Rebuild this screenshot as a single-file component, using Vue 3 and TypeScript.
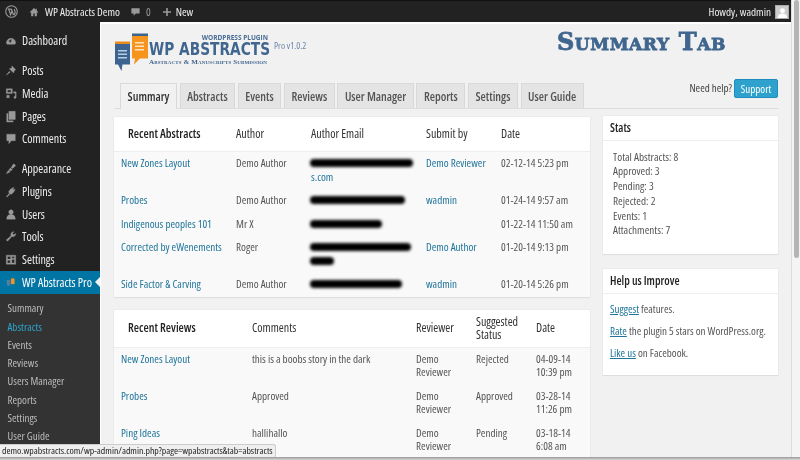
<script setup lang="ts">
type MenuItem = { label: string; icon: string; gap?: boolean }
const menu: MenuItem[] = [
  { label: 'Dashboard', icon: 'M1.500 10a5.500 5.500 0 1 1 11 0l-1 1.500h-9zM4 7.500l3 2.500 .8-5z' },
  { label: 'Posts', icon: 'M8 1.500l4.500 4.500-1.500 1-1 3-5-5 3-1zM5 8l-3.500 4.500L6 9z', gap: true },
  { label: 'Media', icon: 'M1.500 1.500h7v5.500h-7zM3 3v2.500h4V3zM10 5h3v6.500a1.300 1.300 0 1 1-1-1.300V6.500h-2zM2 9h3v3H2z' },
  { label: 'Pages', icon: 'M4.500 1h7.500v9.500H4.500zM2 3.500h1.500v8.500h6v1.500H2z' },
  { label: 'Comments', icon: 'M2 2h10v7.500H7.500L4.500 13V9.500H2z' },
  { label: 'Appearance', icon: 'M7 6l3-4.500 2.500 2L9 7zM6.500 6.500l2 2-2 1.500-2-1.500zM4 9l2 2-4.500 2z', gap: true },
  { label: 'Plugins', icon: 'M6.500 4l4-2-1.500 3 3-.5-2 3.500-3 2.500-3-3zM5 9l-3.500 4 1 .5 3.500-3.500z' },
  { label: 'Users', icon: 'M7 1.500a2.700 2.700 0 1 1-.01 0zM2 12.500c0-4 2-5.500 5-5.500s5 1.500 5 5.500z' },
  { label: 'Tools', icon: 'M12.500 3.500a3.300 3.300 0 0 1-4.500 3.500l-5 5.500-1.500-1.500 5.500-5a3.300 3.300 0 0 1 3.500-4.500L8.500 3.500l1.500 1.500z' },
  { label: 'Settings', icon: 'M1.500 2h11v10.500h-11zM3 3.500v3h3.500v-3zM8 3.500v2h3v-2zM3 8v3h3V8zM8 7v4h3V7z' },
]
const submenu = ['Summary', 'Abstracts', 'Events', 'Reviews', 'Users Manager', 'Reports', 'Settings', 'User Guide']
const tabs = ['Summary', 'Abstracts', 'Events', 'Reviews', 'User Manager', 'Reports', 'Settings', 'User Guide']

const abstracts = [
  { title: 'New Zones Layout', author: 'Demo Author', masks: [103], tail: 's.com', by: 'Demo Reviewer', date: '02-12-14 5:23 pm' },
  { title: 'Probes', author: 'Demo Author', masks: [95], tail: '', by: 'wadmin', date: '01-24-14 9:57 am' },
  { title: 'Indigenous peoples 101', author: 'Mr X', masks: [72], tail: '', by: '', date: '01-22-14 11:50 am' },
  { title: 'Corrected by eWenements', author: 'Roger', masks: [101, 24], tail: '', by: 'Demo Author', date: '01-20-14 9:13 pm' },
  { title: 'Side Factor & Carving', author: 'Demo Author', masks: [92], tail: '', by: 'wadmin', date: '01-20-14 5:26 pm' },
]
const reviews = [
  { title: 'New Zones Layout', comment: 'this is a boobs story in the dark', status: 'Rejected', d1: '04-09-14', d2: '10:39 pm' },
  { title: 'Probes', comment: 'Approved', status: 'Approved', d1: '03-28-14', d2: '11:26 pm' },
  { title: 'Ping Ideas', comment: 'hallihallo', status: 'Pending', d1: '03-18-14', d2: '6:08 am' },
]
const stats = ['Total Abstracts: 8', 'Approved: 3', 'Pending: 3', 'Rejected: 2', 'Events: 1', 'Attachments: 7']
</script>

<template>
  <div class="root">
    <div class="page">
      <header class="topbar">
        <svg class="wp" viewBox="0 0 14 14" width="13" height="13"><circle cx="7" cy="7" r="6.200" fill="none" stroke="#999" stroke-width="1.200"/><path d="M3 4.500h4M7 4.500L9 10.500M4 4.500l2 6 1.500-4M10 4.500l1 3.500-1.500 3" fill="none" stroke="#999" stroke-width="1.300"/></svg>
        <svg class="home" viewBox="0 0 14 14" width="10" height="10"><path d="M7 1.500L1 7.200l1 1L3 7.400V13h3V9h2v4h3V7.400l1 .800 1-1L11 5.300V2.500H9.500v1.400z" fill="#999"/></svg>
        <span class="site">WP Abstracts Demo</span>
        <svg class="bub" viewBox="0 0 12 12" width="9" height="10"><path d="M.5 1h11v7H6.500L3.500 11V8h-3z" fill="#999"/></svg>
        <span class="count">0</span>
        <svg class="plus" viewBox="0 0 10 10" width="8" height="8"><path d="M4 0h2v4h4v2H6v4H4V6H0V4h4z" fill="#999"/></svg>
        <span class="new">New</span>
        <span class="howdy">Howdy, wadmin</span>
        <span class="avatar"><svg viewBox="0 0 12 12" width="11" height="11"><circle cx="6" cy="4" r="2.700" fill="#fff"/><path d="M.8 12c0-3.500 2.200-5 5.200-5s5.200 1.500 5.200 5z" fill="#fff"/></svg></span>
      </header>

      <div class="body">
        <aside class="sidebar">
          <nav class="menu">
            <a v-for="m in menu" :key="m.label" class="item" :class="{ gap: m.gap }">
              <svg viewBox="0 0 14 14" width="13" height="13"><path :d="m.icon" fill="#999" stroke="#999" stroke-width=".4" fill-rule="evenodd"/></svg>
              <span>{{ m.label }}</span>
            </a>
            <a class="item current">
              <svg viewBox="0 0 14 14" width="10" height="10"><rect x="1" y="4" width="5" height="8" fill="#4f7fa8"/><rect x="7" y="2" width="5" height="8" fill="#f7941d"/></svg>
              <span>WP Abstracts Pro</span>
            </a>
          </nav>
          <ul class="sub">
            <li v-for="(s, i) in submenu" :key="i" :class="{ on: s === 'Abstracts' }">{{ s }}</li>
          </ul>
        </aside>

        <main class="main">
          <div class="brand">
            <div class="logo">
              <svg class="books" viewBox="0 0 36 40" width="36" height="40">
                <path d="M1 10.500h15v21H8.500l-1 6.500-3.500-6.500H1z" fill="#3d6490"/>
                <path d="M1 8.500h15v2.500H1z" fill="#e98a1c"/>
                <path d="M4 17h9v1.400H4zM4 20.500h9v1.400H4zM4 24h9v1.400H4z" fill="#b9cde0"/>
                <path d="M18 2.500h16v23h-8l-6 6 1-6h-3z" fill="#f7941d"/>
                <path d="M18 .5h16v2.500H18z" fill="#3d6490"/>
                <path d="M21 9h9v1.400h-9zM21 12.500h9v1.400h-9zM21 16h9v1.400h-9z" fill="#fde3bd"/>
              </svg>
              <div class="logotext">
                <span class="lt1">WORDPRESS PLUGIN</span>
                <span class="lt2">WP ABSTRACTS</span>
                <span class="lt3">Abstracts &amp; Manuscripts Submission</span>
              </div>
            </div>
            <span class="pro">Pro v1.0.2</span>
            <h1 class="title">Summary Tab</h1>
          </div>

          <div class="navrow">
            <div class="tabs">
              <a v-for="(t, i) in tabs" :key="t" class="tab" :class="{ active: i === 0 }">{{ t }}</a>
            </div>
            <div class="help">
              <span>Need help?</span>
              <a class="support">Support</a>
            </div>
          </div>

          <div class="columns">
            <div class="left">
              <section class="card">
                <table class="tbl t1">
                  <colgroup><col class="a1"><col class="a2"><col class="a3"><col class="a4"><col class="a5"></colgroup>
                  <thead>
                    <tr><th class="lead">Recent Abstracts</th><th>Author</th><th>Author Email</th><th>Submit by</th><th>Date</th></tr>
                  </thead>
                  <tbody>
                    <tr v-for="r in abstracts" :key="r.title">
                      <td class="first"><a>{{ r.title }}</a></td>
                      <td>{{ r.author }}</td>
                      <td>
                        <span v-for="(w, i) in r.masks" :key="i" class="mask" :style="{ width: w + 'px' }"></span>
                        <a v-if="r.tail" class="block">{{ r.tail }}</a>
                      </td>
                      <td><a>{{ r.by }}</a></td>
                      <td>{{ r.date }}</td>
                    </tr>
                  </tbody>
                </table>
              </section>

              <section class="card">
                <table class="tbl t2">
                  <colgroup><col class="b1"><col class="b2"><col class="b3"><col class="b4"><col class="b5"></colgroup>
                  <thead>
                    <tr><th class="lead">Recent Reviews</th><th>Comments</th><th>Reviewer</th><th>Suggested<br>Status</th><th>Date</th></tr>
                  </thead>
                  <tbody>
                    <tr v-for="r in reviews" :key="r.title">
                      <td class="first"><a>{{ r.title }}</a></td>
                      <td>{{ r.comment }}</td>
                      <td>Demo<br>Reviewer</td>
                      <td>{{ r.status }}</td>
                      <td>{{ r.d1 }}<br>{{ r.d2 }}</td>
                    </tr>
                  </tbody>
                </table>
              </section>
            </div>

            <div class="right">
              <section class="card side stats">
                <h3>Stats</h3>
                <div class="statlist">
                  <div v-for="s in stats" :key="s">{{ s }}</div>
                </div>
              </section>
              <section class="card side helpus">
                <h3>Help us Improve</h3>
                <div class="helplist">
                  <p><a>Suggest</a> features.</p>
                  <p><a>Rate</a> the plugin 5 stars on WordPress.org.</p>
                  <p><a>Like us</a> on Facebook.</p>
                </div>
              </section>
            </div>
          </div>
        </main>
      </div>
    </div>

    <div class="scroll"><div class="thumb"></div></div>

    <div class="status">demo.wpabstracts.com/wp-admin/admin.php?page=wpabstracts&amp;tab=abstracts</div>
    <div class="edge"></div>
  </div>
</template>

<style>
html, body { margin: 0; background: #f1f1f1; }
</style>

<style scoped>
.root {
  position: relative;
  width: 800px;
  height: 460px;
  overflow: hidden;
  display: flex;
  font-family: "Open Sans", "Liberation Sans", sans-serif;
  font-stretch: 75%;
  font-size: 11.100px;
  color: #444;
  filter: blur(0.35px);
}
.page { width: 791px; height: 460px; display: flex; flex-direction: column; }
.scroll { width: 9px; background: #f4f4f4; border-left: 1px solid #ddd; box-sizing: border-box; padding: 0 2px; }
.thumb { width: 5px; height: 258px; background: #b5b5b5; border-radius: 3px; }

.topbar {
  height: 21px;
  flex: none;
  background: #222;
  border-top: 1px solid #111;
  border-bottom: 1px solid #000;
  box-sizing: content-box;
  margin-bottom: -1px;
  display: flex;
  align-items: center;
  color: #eee;
  font-size: 11.200px;
}
.wp { margin-left: 5px; }
.home { margin-left: 11px; }
.site { margin-left: 6px; }
.bub { margin-left: 11px; }
.count { margin-left: 6px; color: #999; }
.plus { margin-left: 12px; }
.new { margin-left: 5px; }
.howdy { margin-left: auto; }
.avatar {
  width: 12px; height: 12px; margin: 0 2px 0 4px; background: #ccc; border: 1px solid #aaa;
  display: flex; align-items: flex-end; justify-content: center; overflow: hidden;
}

.body { flex: 1; min-height: 0; display: flex; }
.sidebar { width: 100px; flex: none; background: #222; display: flex; flex-direction: column; padding-top: 8px; box-sizing: border-box; }
.menu { display: flex; flex-direction: column; }
.item {
  height: 22.700px;
  display: flex;
  align-items: center;
  gap: 5px;
  padding: 0 0 1px 5px;
  color: #eee;
  font-size: 12px;
  flex: none;
  box-sizing: border-box;
}
.item svg { flex: none; width: 12px; }
.item.gap { margin-top: 7.300px; }
.item.current { position: relative; background: #0074a2; color: #fff; white-space: nowrap; }
.item.current::after {
  content: "";
  position: absolute;
  right: 0; top: 6px;
  border: 5px solid transparent;
  border-right-color: #f1f1f1;
  border-left-width: 0;
}
.sub { list-style: none; margin: 0; padding: 5.100px 0 0 7.500px; background: #333; flex: 1; color: #bbb; font-size: 11px; }
.sub li { height: 18.300px; line-height: 18.300px; white-space: nowrap; }
.sub li.on { color: #2ea2cc; }

.main {
  flex: 1;
  min-width: 0;
  overflow: hidden;
  background: #f1f1f1;
  border-top: 2px solid #fff;
  border-left: 1px solid #fff;
  padding: 10px 13px 0 13px;
  box-sizing: border-box;
}

.brand { height: 45px; display: flex; align-items: flex-start; position: relative; }
.logo { width: 156px; display: flex; align-items: flex-start; }
.books { flex: none; margin-top: -1px; margin-right: -1px; }
.logotext { display: flex; flex-direction: column; flex: 1; min-width: 0; margin-top: 1px; }
.lt1 { font-size: 6.500px; font-weight: 700; color: #4a6c94; text-align: right; line-height: 6px; font-stretch: 100%; margin-right: 2px; white-space: nowrap; }
.lt2 {
  font-family: "DejaVu Sans", sans-serif; font-weight: 700; font-size: 18px; line-height: 16px;
  color: #40668f; white-space: nowrap;
  transform: scaleX(.85); transform-origin: left center;
}
.lt3 {
  font-family: "Liberation Serif", serif; font-weight: 700; font-size: 7px; line-height: 9px;
  font-variant: small-caps; color: #40668f; letter-spacing: .13px; white-space: nowrap; margin-top: 1px;
}
.pro { margin: 5px 0 0 4px; font-size: 9.400px; color: #6d87a8; white-space: nowrap; }
.title {
  margin: -6px 52px 0 auto;
  font-family: "DejaVu Serif", serif;
  font-stretch: 100%;
  font-weight: 900;
  font-variant: small-caps;
  font-size: 24px;
  line-height: 28px;
  letter-spacing: .6px;
  color: #40668f;
  -webkit-text-stroke: .8px #40668f;
  white-space: nowrap;
}

.navrow { height: 30px; border-bottom: 1px solid #ddd; display: flex; justify-content: space-between; box-sizing: border-box; }
.tabs { display: flex; gap: 2.500px; padding: 4px 0 0 6px; }
.tab {
  height: 25px;
  padding: 0 6.600px;
  display: flex; align-items: center;
  background: #e4e4e4;
  border: 1px solid #d9d9d9;
  border-bottom: 0;
  box-sizing: border-box;
  color: #555;
  font-size: 12px;
  font-weight: 600;
  white-space: nowrap;
}
.tab.active { background: #f1f1f1; color: #333; margin-bottom: -1px; height: 26px; }
.help { display: flex; align-items: flex-start; gap: 2px; font-size: 11px; color: #444; }
.help span { line-height: 17px; }
.support {
  width: 44px; height: 19px; background: #2ea2cc; border: 1px solid #1e8cbe; border-radius: 2px;
  color: #fff; display: flex; align-items: center; justify-content: center; box-sizing: border-box; font-size: 11px;
}

.columns { display: flex; gap: 13px; margin-top: 8px; align-items: flex-start; }
.left { width: 476px; flex: none; display: flex; flex-direction: column; gap: 13px; }
.right { width: 175px; flex: none; display: flex; flex-direction: column; gap: 15px; margin-top: -1px; }
.card { background: #fff; box-shadow: 0 1px 1px rgba(0, 0, 0, .06), 0 0 0 1px rgba(0, 0, 0, .02); }

.tbl { width: 100%; border-collapse: collapse; table-layout: fixed; }
.a1 { width: 122px; } .a2 { width: 75px; } .a3 { width: 115px; } .a4 { width: 75px; } .a5 { width: 89px; }
.b1 { width: 138px; } .b2 { width: 164px; } .b3 { width: 60px; } .b4 { width: 60px; } .b5 { width: 54px; }
th { text-align: left; font-weight: 400; font-size: 12px; color: #333; padding: 0; background: #fff; border-bottom: 1px solid #eee; line-height: 13.500px; }
.t1 th { height: 34px; }
.t2 th { height: 37px; }
th.lead { padding-left: 14px; font-weight: 600; color: #222; white-space: nowrap; }
td { padding: 4px 4px 6px 0; line-height: 13.500px; vertical-align: top; background: #f9f9f9; color: #555; }
td.first { padding-left: 7px; white-space: nowrap; padding-right: 0; }
a { color: #21759b; }
.block { display: block; }
.mask {
  display: block;
  height: 8px;
  margin: 3px 0 2.500px -1px;
  background: #000;
  border-radius: 4px;
  filter: blur(1.500px);
}
.mask + .mask { margin-top: 5.500px; }
.t1 td:nth-child(4), .t1 td:nth-child(5) { white-space: nowrap; }

.side h3 { margin: 0; height: 25px; line-height: 23px; padding-left: 7px; font-size: 11.700px; font-weight: 600; color: #222; border-bottom: 1px solid #eee; box-sizing: border-box; }
.stats { height: 138px; }
.statlist { padding: 8.500px 0 0 10px; color: #555; font-size: 11.200px; }
.statlist div { height: 14.800px; line-height: 14.800px; }
.helpus { height: 106px; }
.helplist { padding: 7.500px 0 0 7px; font-size: 11px; color: #555; }
.helplist p { margin: 0 0 9px; line-height: 13px; white-space: nowrap; }
.helplist a { text-decoration: underline; }

.status {
  position: absolute;
  left: 0; bottom: 3px;
  width: 276px;
  height: 13px;
  line-height: 12px;
  padding-left: 2px;
  box-sizing: border-box;
  background: #efefef;
  border: 1px solid #ccc;
  border-left: 0;
  border-bottom: 0;
  border-radius: 0 3px 0 0;
  font-size: 9.750px;
  color: #222;
  white-space: nowrap;
  overflow: hidden;
}
.edge { position: absolute; left: 0; right: 0; bottom: 0; height: 3px; background: linear-gradient(#999, #d8d8d8); }
</style>
